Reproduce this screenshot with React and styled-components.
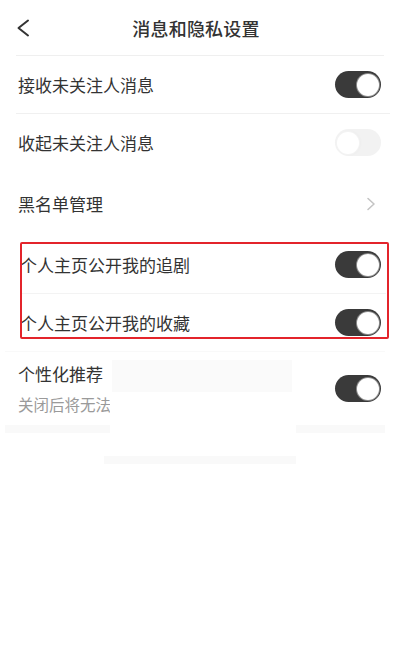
import React from "react";
import styled, { createGlobalStyle } from "styled-components";

const GlobalStyle = createGlobalStyle`
  html, body { margin: 0; padding: 0; background: #ffffff; }
  body {
    font-family: "Noto Sans CJK SC", "Noto Sans", "Liberation Sans", sans-serif;
    color: #333333;
  }
  * { box-sizing: border-box; }
`;

const Page = styled.div`
  position: relative;
  width: 400px;
  min-height: 655px;
  background: #ffffff;
`;

const Header = styled.header`
  display: grid;
  grid-template-columns: 56px 1fr 56px;
  align-items: center;
  height: 56px;
  margin: 0 16px;
  border-bottom: 1px solid #efefef;
`;

const BackButton = styled.button`
  display: flex;
  align-items: center;
  width: 24px;
  height: 24px;
  padding: 0;
  border: none;
  background: none;
  cursor: pointer;
`;

const Title = styled.h1`
  margin: 0;
  text-align: center;
  font-size: 18px;
  font-weight: 500;
  color: #333333;
  letter-spacing: 0.2px;
  transform: translateX(-4px);
`;

const List = styled.div`
  display: flex;
  flex-direction: column;
`;

const Row = styled.div`
  display: flex;
  align-items: center;
  justify-content: space-between;
  height: ${(p) => p.$h || 57}px;
  padding: 0 18px 0 ${(p) => p.$pl || 18}px;
`;

const TextBlock = styled.div`
  display: flex;
  flex-direction: column;
  gap: 9px;
`;

const Label = styled.span`
  font-size: 17px;
  line-height: 22px;
  color: #333333;
`;

const SubLabel = styled.span`
  font-size: 15.5px;
  line-height: 20px;
  color: #9a9a9a;
`;

const Divider = styled.div`
  height: 1px;
  margin: 0 ${(p) => p.$r || 10}px 0 ${(p) => p.$l || 16}px;
  background: ${(p) => p.$c || "#f0f0f0"};
`;

const SectionEnd = styled.div`
  height: 8px;
  margin: 0 15px 0 5px;
  background: #f9f9f9;
`;

const Track = styled.div`
  position: relative;
  flex: none;
  width: 46px;
  height: 27px;
  border-radius: 14px;
  background: ${(p) => (p.$on ? "#3a3a3a" : "#eeeeee")};
  opacity: ${(p) => (p.$on ? 1 : 0.75)};
  margin-right: 1px;
`;

const Knob = styled.div`
  position: absolute;
  top: 2.5px;
  ${(p) => (p.$on ? "right: 2px;" : "left: 2px;")}
  width: 22px;
  height: 22px;
  border-radius: 50%;
  background: #ffffff;
  box-shadow: ${(p) =>
    p.$on ? "0 0 0 1px #8a8a8a" : "0 0 0 1px #f0f0f0, 1px 0 3px rgba(0,0,0,0.05)"};
`;

const Chevron = styled.svg`
  width: 10px;
  height: 14px;
  margin-right: 6px;
`;

const RedFrame = styled.div`
  position: absolute;
  top: 242px;
  left: 20px;
  width: 369px;
  height: 97px;
  border: 2px solid #e3242b;
  border-radius: 2px;
  pointer-events: none;
`;

const ErasedSheet = styled.div`
  position: absolute;
  top: 360px;
  left: 110px;
  width: 186px;
  height: 104px;
  display: flex;
  flex-direction: column;
  justify-content: space-between;
  background: #ffffff;
  pointer-events: none;
`;

const SheetHead = styled.div`
  height: 32px;
  margin: 0 4px 0 2px;
  background: #fafafa;
`;

const SheetFoot = styled.div`
  height: 8px;
  margin-left: -6px;
  background: #f9f9f9;
`;

function Toggle({ on }) {
  return (
    <Track $on={on}>
      <Knob $on={on} />
    </Track>
  );
}

export default function App() {
  return (
    <>
      <GlobalStyle />
      <Page>
        <Header>
          <BackButton aria-label="返回">
            <svg width="14" height="18" viewBox="0 0 14 18">
              <polyline
                points="12,1.5 2.5,9 12,16.5"
                fill="none"
                stroke="#333"
                strokeWidth="2"
                strokeLinecap="round"
                strokeLinejoin="round"
              />
            </svg>
          </BackButton>
          <Title>消息和隐私设置</Title>
          <span />
        </Header>
        <List>
          <Row>
            <Label>接收未关注人消息</Label>
            <Toggle on />
          </Row>
          <Divider $l={16} $r={10} />
          <Row>
            <Label>收起未关注人消息</Label>
            <Toggle on={false} />
          </Row>
          <Row $h={65}>
            <Label>黑名单管理</Label>
            <Chevron viewBox="0 0 10 14">
              <polyline
                points="2,1.5 8,7 2,12.5"
                fill="none"
                stroke="#c4c4c4"
                strokeWidth="1.6"
                strokeLinecap="round"
                strokeLinejoin="round"
              />
            </Chevron>
          </Row>
          <Row $pl={20}>
            <Label>个人主页公开我的追剧</Label>
            <Toggle on />
          </Row>
          <Divider $l={22} $r={14} $c="#f3f3f3" />
          <Row $pl={20}>
            <Label>个人主页公开我的收藏</Label>
            <Toggle on />
          </Row>
          <Divider $l={5} $r={15} $c="#f9f9f9" />
          <Row $h={73}>
            <TextBlock>
              <Label>个性化推荐</Label>
              <SubLabel>关闭后将无法</SubLabel>
            </TextBlock>
            <Toggle on />
          </Row>
          <SectionEnd />
        </List>
        <RedFrame />
        <ErasedSheet>
          <SheetHead />
          <SheetFoot />
        </ErasedSheet>
      </Page>
    </>
  );
}
